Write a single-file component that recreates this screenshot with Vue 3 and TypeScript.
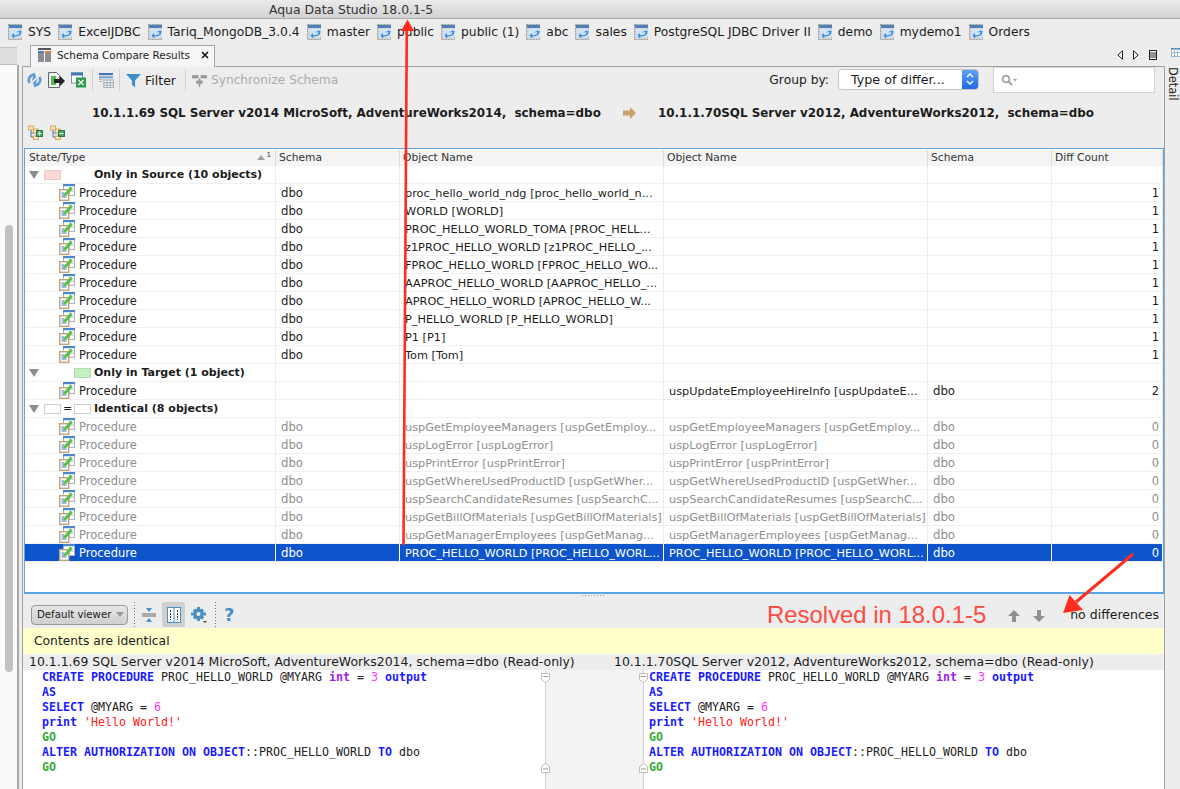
<script setup lang="ts">
type Row = { kind: 'group' | 'item'; label?: string; swatch?: string; cells?: string[]; dim?: boolean; sel?: boolean }

const dbs = ['SYS', 'ExcelJDBC', 'Tariq_MongoDB_3.0.4', 'master', 'public', 'public (1)', 'abc', 'sales', 'PostgreSQL JDBC Driver II', 'demo', 'mydemo1', 'Orders']

function item(a: string, s: string, b: string, s2: string, n: string, dim = false, sel = false): Row {
  return { kind: 'item', cells: [s, a, b, s2, n], dim, sel }
}

const rows: Row[] = [
  { kind: 'group', label: 'Only in Source (10 objects)', swatch: 'src' },
  item('proc_hello_world_ndg [proc_hello_world_n...', 'dbo', '', '', '1'),
  item('WORLD [WORLD]', 'dbo', '', '', '1'),
  item('PROC_HELLO_WORLD_TOMA [PROC_HELL...', 'dbo', '', '', '1'),
  item('z1PROC_HELLO_WORLD [z1PROC_HELLO_...', 'dbo', '', '', '1'),
  item('FPROC_HELLO_WORLD [FPROC_HELLO_WO...', 'dbo', '', '', '1'),
  item('AAPROC_HELLO_WORLD [AAPROC_HELLO_...', 'dbo', '', '', '1'),
  item('APROC_HELLO_WORLD [APROC_HELLO_W...', 'dbo', '', '', '1'),
  item('P_HELLO_WORLD [P_HELLO_WORLD]', 'dbo', '', '', '1'),
  item('P1 [P1]', 'dbo', '', '', '1'),
  item('Tom [Tom]', 'dbo', '', '', '1'),
  { kind: 'group', label: 'Only in Target (1 object)', swatch: 'tgt' },
  item('', '', 'uspUpdateEmployeeHireInfo [uspUpdateE...', 'dbo', '2'),
  { kind: 'group', label: 'Identical (8 objects)', swatch: 'same' },
  item('uspGetEmployeeManagers [uspGetEmploy...', 'dbo', 'uspGetEmployeeManagers [uspGetEmploy...', 'dbo', '0', true),
  item('uspLogError [uspLogError]', 'dbo', 'uspLogError [uspLogError]', 'dbo', '0', true),
  item('uspPrintError [uspPrintError]', 'dbo', 'uspPrintError [uspPrintError]', 'dbo', '0', true),
  item('uspGetWhereUsedProductID [uspGetWher...', 'dbo', 'uspGetWhereUsedProductID [uspGetWher...', 'dbo', '0', true),
  item('uspSearchCandidateResumes [uspSearchC...', 'dbo', 'uspSearchCandidateResumes [uspSearchC...', 'dbo', '0', true),
  item('uspGetBillOfMaterials [uspGetBillOfMaterials]', 'dbo', 'uspGetBillOfMaterials [uspGetBillOfMaterials]', 'dbo', '0', true),
  item('uspGetManagerEmployees [uspGetManag...', 'dbo', 'uspGetManagerEmployees [uspGetManag...', 'dbo', '0', true),
  item('PROC_HELLO_WORLD [PROC_HELLO_WORL...', 'dbo', 'PROC_HELLO_WORLD [PROC_HELLO_WORL...', 'dbo', '0', false, true),
]

const code: [string, string][][] = [
  [['k', 'CREATE PROCEDURE'], ['', ' PROC_HELLO_WORLD @MYARG '], ['t', 'int'], ['', ' = '], ['n', '3'], ['', ' '], ['k', 'output']],
  [['k', 'AS']],
  [['k', 'SELECT'], ['', ' @MYARG = '], ['n', '6']],
  [['k', 'print'], ['', ' '], ['s', "'Hello World!'"]],
  [['g', 'GO']],
  [['k', 'ALTER AUTHORIZATION ON OBJECT'], ['', '::PROC_HELLO_WORLD '], ['k', 'TO'], ['', ' dbo']],
  [['g', 'GO']],
]
</script>

<template>
  <div class="screen">
    <svg class="defs" width="0" height="0" aria-hidden="true">
      <symbol id="db" viewBox="0 0 15 16">
        <rect x="0.5" y="0.5" width="13" height="15" fill="#d4d8dc" stroke="#9a9a9a" stroke-dasharray="2 1" />
        <rect x="1" y="1" width="13" height="3" fill="#4f7fb8" />
        <rect x="3" y="5" width="11" height="8" fill="#cfe4f6" />
        <path d="M12 6.5 8 8.2h3.5c.3 2-1.5 3-5 3l-1-2.2-2 2.8 2.6 2.7.4-2.1c4 0 7.2-1 7-5.4z" fill="#3d8fd8" />
      </symbol>
      <symbol id="proc" viewBox="0 0 16 17">
        <rect x="4.5" y="0.5" width="11" height="11" fill="#fff" stroke="#a9b2bb" />
        <rect x="4" y="0" width="12" height="2.2" fill="#4a86c8" />
        <path d="M10.500 3v9M5 7h11" stroke="#b8c0c8" />
        <rect x="0.7" y="5.7" width="9" height="10.6" fill="#fff" stroke="#c6a27a" stroke-width="1.4" />
        <path d="M2.500 9h3M2.500 11h5M2.500 13h5" stroke="#3f74c5" />
        <path d="M5 10 11.500 2.500l2.400 2.300-6.500 7-3 .8z" fill="#5cc24a" />
      </symbol>
      <symbol id="folder" viewBox="0 0 15 15">
        <path d="M3 5v7h4M3 8h4" fill="none" stroke="#3a78c0" />
        <rect x="0.5" y="1" width="5" height="4" fill="#fbe3b4" stroke="#d9a860" />
        <rect x="5.5" y="4" width="5" height="4" fill="#fbe3b4" stroke="#d9a860" />
        <rect x="5.5" y="11" width="5" height="3.500" fill="#fbe3b4" stroke="#d9a860" />
        <rect x="8.500" y="5.500" width="6" height="6" fill="#4aa56a" stroke="#2c7a44" />
      </symbol>
    </svg>

    <header class="titlebar">Aqua Data Studio 18.0.1-5</header>

    <nav class="dbbar">
      <span v-for="d in dbs" :key="d" class="db">
        <svg class="dbicon"><use href="#db" /></svg>{{ d }}
      </span>
    </nav>

    <div class="work">
      <aside class="left">
        <div class="lefthead"></div>
        <div class="lefttrack"><div class="thumb"></div></div>
      </aside>

      <main class="center">
        <div class="tabrow">
          <div class="tab">
            <svg class="tabicon" viewBox="0 0 13 14">
              <rect x="0" y="0" width="13" height="2" fill="#555" />
              <rect x="0" y="3" width="6" height="11" fill="#8b8f94" />
              <rect x="7" y="3" width="6" height="11" fill="#8b8f94" />
              <rect x="0" y="3" width="6" height="2" fill="#4c7fb5" />
              <rect x="7" y="3" width="6" height="2" fill="#e07b3a" />
            </svg>
            <span>Schema Compare Results</span>
            <svg class="close" viewBox="0 0 8 8"><path d="M1 1l6 6M7 1 1 7" stroke="#111" stroke-width="1.6" /></svg>
          </div>
          <div class="tabnav">
            <svg viewBox="0 0 6 10"><path d="M5.500 .8v8.400L.8 5z" fill="#fff" stroke="#222" /></svg>
            <svg viewBox="0 0 6 10"><path d="M.5 .8v8.400L5.200 5z" fill="#fff" stroke="#222" /></svg>
            <svg viewBox="0 0 8 10"><rect x=".5" y=".5" width="7" height="9" fill="#fff" stroke="#222" /><path d="M1 3h6M1 5h6M1 7h6" stroke="#222" /></svg>
          </div>
        </div>

        <section class="panel">
          <div class="toolbar">
            <svg class="ti" viewBox="0 0 15 16">
              <path d="M2.500 11C.5 7 3 2.500 8 2.500" fill="none" stroke="#5a9ad6" stroke-width="2.600" />
              <path d="M12.500 5c2 4-.5 8.500-5.500 8.500" fill="none" stroke="#5a9ad6" stroke-width="2.600" />
              <path d="M7.500 0 9 5.500 4.500 9.500z" fill="#5a9ad6" />
              <path d="M7.500 16 6 10.500l4.500-4z" fill="#5a9ad6" />
            </svg>
            <svg class="ti wide" viewBox="0 0 17 17">
              <path d="M.5.500h8l3 3v12h-11z" fill="#f2f2f2" stroke="#666" />
              <rect x="3" y="4" width="5" height="9" fill="#58b858" />
              <path d="M6 7h6V4l5 5-5 5v-3H6z" fill="#222" />
            </svg>
            <svg class="ti" viewBox="0 0 15 15">
              <rect x=".5" y=".5" width="11" height="10" fill="#fff" stroke="#7f93a8" />
              <rect x="0" y="0" width="12" height="3" fill="#3f74b5" />
              <rect x="5" y="5" width="10" height="10" fill="#2f9a4a" />
              <path d="M7.500 7.500l5 5M12.500 7.500l-5 5" stroke="#fff" stroke-width="1.300" />
            </svg>
            <i class="sep"></i>
            <svg class="ti tgrid" viewBox="0 0 14 14">
              <rect x="0" y="0" width="13" height="2" fill="#3f74b5" />
              <rect x="0" y="3" width="13" height="2" fill="#7fa6d0" />
              <rect x="4.500" y="6.500" width="9" height="7" fill="#fff" stroke="#a8b0b8" />
              <path d="M4.500 9h9M4.500 11.500h9M7.500 6.500v7M10.500 6.500v7" stroke="#a8b0b8" />
              <path d="M0 6h3M0 8h3" stroke="#a8b0b8" />
            </svg>
            <i class="sep"></i>
            <svg class="ti funnel" viewBox="0 0 14 14"><path d="M0 1h14L8.500 7v6.500l-3-2.500V7z" fill="#3f8fc8" /></svg>
            <span class="filter">Filter</span>
            <i class="sep"></i>
            <svg class="ti sync" viewBox="0 0 14 14">
              <rect x="0" y="2" width="6" height="3" fill="#9a9a9a" />
              <rect x="8" y="2" width="6" height="3" fill="#9a9a9a" />
              <rect x="4" y="7" width="6" height="3" fill="#9a9a9a" />
              <path d="M7 5v8" stroke="#9a9a9a" stroke-width="1.500" />
            </svg>
            <span class="syncl">Synchronize Schema</span>
            <span class="spacer"></span>
            <span class="grp">Group by:</span>
            <div class="select">
              <span class="seltext">Type of differ...</span>
              <span class="selbtn">
                <svg viewBox="0 0 8 14" width="8" height="14"><path d="M1 5l3-3 3 3M1 9l3 3 3-3" fill="none" stroke="#fff" stroke-width="1.300" /></svg>
              </span>
            </div>
            <div class="search">
              <svg viewBox="0 0 18 12" width="18" height="12">
                <circle cx="5" cy="5" r="3.400" fill="none" stroke="#a0a0a0" stroke-width="1.800" />
                <path d="M7.500 7.500 11 11" stroke="#a0a0a0" stroke-width="2" />
                <path d="M12 5h4l-2 2.500z" fill="#a0a0a0" />
              </svg>
            </div>
          </div>

          <div class="conn">
            <span class="cleft">10.1.1.69 SQL Server v2014 MicroSoft, AdventureWorks2014,&nbsp; schema=dbo</span>
            <svg class="carrow" viewBox="0 0 13 12"><path d="M0 3.500h7V0l6 6-6 6V8.500H0z" fill="#c9a36a" /></svg>
            <span>10.1.1.70SQL Server v2012, AdventureWorks2012,&nbsp; schema=dbo</span>
          </div>

          <div class="folds">
            <svg class="fold" viewBox="0 0 15 15"><use href="#folder" /><path d="M9.500 8.500h4M11.500 6.500v4" stroke="#fff" /></svg>
            <svg class="fold" viewBox="0 0 15 15"><use href="#folder" /><path d="M9.500 8.500h4" stroke="#fff" /></svg>
          </div>

          <div class="table">
            <div class="thead">
              <div class="th first">State/Type<span class="sort"><i></i><sup>1</sup></span></div>
              <div class="th">Schema</div>
              <div class="th">Object Name</div>
              <div class="th">Object Name</div>
              <div class="th">Schema</div>
              <div class="th">Diff Count</div>
            </div>
            <div v-for="(r, i) in rows" :key="i" class="tr" :class="{ dim: r.dim, sel: r.sel }">
              <template v-if="r.kind === 'group'">
                <div class="td groupcell">
                  <i class="tri"></i>
                  <i class="sw" :class="r.swatch === 'src' ? 'pink' : r.swatch === 'same' ? 'plain' : 'none'"></i>
                  <b class="eq">{{ r.swatch === 'same' ? '=' : '' }}</b>
                  <i class="sw" :class="r.swatch === 'tgt' ? 'green' : r.swatch === 'same' ? 'plain' : 'none'"></i>
                  <strong>{{ r.label }}</strong>
                </div>
                <div class="td"></div><div class="td"></div><div class="td"></div><div class="td"></div><div class="td"></div>
              </template>
              <template v-else>
                <div class="td itemcell"><svg class="proc"><use href="#proc" /></svg><span class="pl">Procedure</span></div>
                <div class="td sch">{{ r.cells![0] }}</div>
                <div class="td obj">{{ r.cells![1] }}</div>
                <div class="td obj">{{ r.cells![2] }}</div>
                <div class="td sch">{{ r.cells![3] }}</div>
                <div class="td num">{{ r.cells![4] }}</div>
              </template>
            </div>
          </div>

          <div class="sash"></div>

          <div class="viewerbar">
            <div class="viewer">Default viewer<i></i></div>
            <i class="dots"></i>
            <svg class="vi collapse" viewBox="0 0 14 16">
              <path d="M0 7h14M0 9h14" stroke="#666" />
              <path d="M4 1h6L7 5zM4 15h6l-3-4z" fill="#4a90c4" />
            </svg>
            <div class="toggled">
              <svg viewBox="0 0 14 16" width="14" height="16">
                <rect x=".5" y=".5" width="13" height="15" fill="#fff" stroke="#4a90c4" />
                <path d="M7 0v16" stroke="#4a90c4" />
                <path d="M3.500 3v10M10.500 3v10" stroke="#333" stroke-dasharray="2 1" />
              </svg>
            </div>
            <svg class="vi gear" viewBox="0 0 16 16">
              <path d="M6 0h3v2.500l2-1 2 2-1 2h3v3h-3l1 2-2 2-2-1V14H6v-2.500l-2 1-2-2 1-2H0v-3h3l-1-2 2-2 2 1z" fill="#4a8fc0" />
              <circle cx="7.500" cy="7" r="2" fill="#ededed" />
              <path d="M12 14h4l-2 2z" fill="#444" />
            </svg>
            <i class="dots two"></i>
            <span class="help">?</span>
            <span class="spacer"></span>
            <span class="resolved">Resolved in 18.0.1-5</span>
            <svg class="updown" viewBox="0 0 12 12"><path d="M6 0l6 6H8v6H4V6H0z" fill="#909090" /></svg>
            <svg class="updown dn" viewBox="0 0 12 12"><path d="M6 12l6-6H8V0H4v6H0z" fill="#909090" /></svg>
            <span class="nodiff">no differences</span>
          </div>

          <div class="notice">Contents are identical</div>

          <div class="cmphead">
            <span class="hl">10.1.1.69 SQL Server v2014 MicroSoft, AdventureWorks2014, schema=dbo (Read-only)</span>
            <span>10.1.1.70SQL Server v2012, AdventureWorks2012, schema=dbo (Read-only)</span>
          </div>

          <div class="cmp">
            <pre class="code lcode"><div v-for="(l, i) in code" :key="i" class="line"><span v-for="(t, j) in l" :key="j" :class="t[0]">{{ t[1] }}</span></div></pre>
            <div class="gutter">
              <svg class="mk m1 ml" viewBox="0 0 9 10"><path d="M.5.500h8v6l-4 3-4-3z" fill="#fff" stroke="#bdbdbd" /><path d="M2 3.500h5" stroke="#999" /></svg>
              <svg class="mk m2 ml" viewBox="0 0 9 10"><path d="M.5 9.500h8v-6l-4-3-4 3z" fill="#fff" stroke="#bdbdbd" /><path d="M2 6h5" stroke="#999" /></svg>
              <svg class="mk m1 mr" viewBox="0 0 9 10"><path d="M.5.500h8v6l-4 3-4-3z" fill="#fff" stroke="#bdbdbd" /><path d="M2 3.500h5" stroke="#999" /></svg>
              <svg class="mk m2 mr" viewBox="0 0 9 10"><path d="M.5 9.500h8v-6l-4-3-4 3z" fill="#fff" stroke="#bdbdbd" /><path d="M2 6h5" stroke="#999" /></svg>
            </div>
            <pre class="code rcode"><div v-for="(l, i) in code" :key="i" class="line"><span v-for="(t, j) in l" :key="j" :class="t[0]">{{ t[1] }}</span></div></pre>
          </div>
        </section>
      </main>

      <aside class="right">
        <svg class="rgrid" viewBox="0 0 9 9"><rect x=".5" y=".5" width="9" height="8" fill="#fff" stroke="#9db6d0" /><path d="M0 .5h10" stroke="#4a80b8" stroke-width="2" /><path d="M3.500 0v9M6.500 0v9M0 4.500h9" stroke="#9db6d0" /></svg>
        <span class="detail">Detail</span>
      </aside>
    </div>

    <svg class="overlay" viewBox="0 0 1180 789" width="1180" height="789">
      <path d="M403.500 545 406.800 28" stroke="#ff2c1f" stroke-width="2.600" fill="none" />
      <path d="M407.500 19.500 414 31H401z" fill="#ff2c1f" />
      <path d="M1133 554 1076 602" stroke="#ff2c1f" stroke-width="3" fill="none" />
      <path d="M1063 613 1069.500 595 1083 610z" fill="#ff2c1f" />
    </svg>
  </div>
</template>

<style scoped>
.screen {
  position: relative;
  width: 1180px;
  height: 789px;
  overflow: hidden;
  display: flex;
  flex-direction: column;
  background: #ededed;
  color: #1c1c1c;
  font-family: "DejaVu Sans", sans-serif;
  font-size: 11.5px;
}
.defs { position: absolute; }
.titlebar {
  height: 19px;
  flex: none;
  box-sizing: border-box;
  padding-left: 269px;
  line-height: 19px;
  font-size: 12.4px;
  color: #333;
  background: linear-gradient(#ebebeb, #d2d2d2);
  border-bottom: 1px solid #ababab;
}
.dbbar {
  height: 25px;
  flex: none;
  display: flex;
  align-items: center;
  gap: 7px;
  padding-left: 8px;
  font-size: 12.3px;
  white-space: nowrap;
}
.db { display: inline-flex; align-items: center; }
.dbicon { width: 15px; height: 16px; margin-right: 5px; }
.work { flex: 1; display: flex; min-height: 0; }
.left { width: 22px; flex: none; display: flex; flex-direction: column; }
.lefthead {
  height: 18px;
  box-sizing: border-box;
  margin-top: 3px;
  background: #dedede;
  border-top: 1px solid #c4c4c4;
  border-bottom: 1px solid #bdbdbd;
  width: 17px;
}
.lefttrack {
  flex: 1;
  position: relative;
  background: #fafafa;
  border-right: 2px solid #a8a8a8;
  width: 17px;
}
.thumb {
  position: absolute;
  left: 5px;
  top: 160px;
  width: 8px;
  height: 447px;
  border-radius: 4px;
  background: #c2c2c2;
}
.center { flex: 1; min-width: 0; display: flex; flex-direction: column; }
.tabrow { height: 22px; flex: none; display: flex; position: relative; }
.tab {
  margin: 1px 0 -1px 8px;
  width: 185px;
  box-sizing: border-box;
  height: 22px;
  display: flex;
  align-items: center;
  background: #f6f6f6;
  border: 1px solid #a5a5a5;
  border-bottom: none;
  padding: 0 0 3px 7px;
  position: relative;
  z-index: 1;
  font-size: 10.4px;
}
.tabicon { width: 13px; height: 14px; margin-right: 6px; }
.close { width: 8px; height: 8px; margin-left: auto; margin-right: 5px; }
.tabnav { margin-left: auto; display: flex; align-items: center; gap: 10px; padding-right: 8px; }
.tabnav svg { width: 6px; height: 10px; }
.tabnav svg:last-child { width: 8px; }
.panel {
  flex: 1;
  min-height: 0;
  display: flex;
  flex-direction: column;
  border-left: 1px solid #a0a0a0;
  border-right: 1px solid #a0a0a0;
  border-top: 1px solid #a0a0a0;
  background: #ededed;
}
.toolbar { height: 26px; flex: none; display: flex; align-items: center; padding-left: 4px; padding-right: 9px; }
.ti { width: 15px; height: 16px; margin-right: 6px; flex: none; }
.ti.wide { width: 17px; height: 17px; }
.ti.tgrid { margin-right: 5px; height: 15px; }
.sep { width: 1px; height: 22px; background: #cfcfcf; margin: 0 6px 0 0; flex: none; }
.funnel { margin-right: 4px; height: 15px; }
.filter { font-size: 12.5px; margin-right: 9px; }
.sync { margin-right: 4px; height: 15px; }
.syncl { color: #ababab; font-size: 12.2px; }
.spacer { flex: 1; }
.grp { margin-right: 9px; font-size: 12.3px; }
.select {
  width: 141px;
  height: 21px;
  box-sizing: border-box;
  background: #fff;
  border: 1px solid #c4c4c4;
  border-radius: 4px;
  display: flex;
  align-items: center;
  overflow: hidden;
  font-size: 12.7px;
  margin-top: -2px;
}
.seltext { padding-left: 12px; flex: 1; white-space: nowrap; }
.selbtn {
  width: 16px;
  height: 100%;
  background: linear-gradient(#5ea2f5, #1f68e0);
  display: flex;
  align-items: center;
  justify-content: center;
}
.search {
  width: 162px;
  height: 26px;
  box-sizing: border-box;
  margin-left: 14px;
  background: #fff;
  border: 1px solid #d2d2d2;
  display: flex;
  align-items: center;
  padding-left: 7px;
}
.conn {
  height: 18px;
  flex: none;
  margin-top: 11px;
  padding-left: 69px;
  display: flex;
  align-items: center;
  font-weight: 700;
  font-size: 11.92px;
  white-space: nowrap;
}
.cleft { width: 531px; flex: none; }
.carrow { width: 13px; height: 12px; flex: none; margin-right: 22px; }
.folds { height: 15px; flex: none; display: flex; gap: 7px; padding-left: 5px; margin-top: 3px; }
.fold { width: 15px; height: 15px; }
.table {
  height: 446px;
  flex: none;
  margin: 8px 0 0 1px;
  box-sizing: border-box;
  width: 1140px;
  border: 1px solid #5aa5e6;
  border-width: 1px 1px 2px 1px;
  background: #fff;
  overflow: hidden;
}
.thead, .tr { display: grid; grid-template-columns: 251px 124px 264px 264px 124px 111px; }
.thead { height: 16px; background: #f4f4f4; margin-top: 1px; font-size: 10.7px; color: #333; }
.th { line-height: 15px; padding-left: 3px; border-right: 1px solid #dcdcdc; white-space: nowrap; position: relative; }
.th.first { padding-left: 4px; }
.sort { position: absolute; right: 4px; top: 0; display: flex; align-items: center; height: 15px; gap: 2px; }
.sort i { border: 4.500px solid transparent; border-top: 0; border-bottom: 5px solid #a2a2a2; }
.sort sup { font-size: 7px; line-height: 7px; margin-top: -4px; }
.tr { height: 18px; line-height: 19px; border-bottom: 1px solid #f0f0f0; box-sizing: border-box; white-space: nowrap; }
.td { border-right: 1px solid #ececec; overflow: hidden; position: relative; min-width: 0; }
.groupcell { display: flex; align-items: center; overflow: visible; font-size: 11px; line-height: 17px; }
.tri { width: 0; height: 0; margin-left: 4px; border-left: 5px solid transparent; border-right: 5px solid transparent; border-top: 8px solid #8c8c8c; }
.sw { width: 17px; height: 10px; box-sizing: border-box; flex: none; }
.pink { background: #fdd9d3; border: 1px solid #e8c8c4; }
.green { background: #c2f0c2; border: 1px solid #b0deb0; }
.plain { background: #fff; border: 1px solid #cfcfcf; }
.none { background: transparent; }
.groupcell > .sw:nth-of-type(2) { margin-left: 5px; }
.eq { width: 13px; text-align: center; font-weight: 400; font-size: 11px; flex: none; }
strong { font-weight: 700; margin-left: 3px; }
.itemcell { display: flex; align-items: center; padding-left: 34px; line-height: 17px; }
.pl { margin-top: 2px; }
.proc { width: 16px; height: 17px; margin-right: 4px; flex: none; }
.sch { padding-left: 5px; font-size: 11.7px; }
.obj { padding-left: 5px; font-size: 11.3px; }
.num { text-align: right; padding-right: 3px; }
.dim { color: #8e8e8e; }
.sel { background: #0e54ca; color: #fff; }
.sel .td { border-right-color: #fff; }
.sash { height: 7px; flex: none; position: relative; }
.sash::after {
  content: "";
  position: absolute;
  left: 559px;
  top: 1px;
  width: 24px;
  height: 1px;
  background: repeating-linear-gradient(90deg, #999 0 1px, transparent 1px 3px);
}
.viewerbar { height: 27px; flex: none; display: flex; align-items: center; padding: 0 5px 0 8px; }
.viewer {
  width: 97px;
  height: 20px;
  box-sizing: border-box;
  border: 1px solid #999;
  border-radius: 4px;
  background: linear-gradient(#e6e6e6, #cfcfcf);
  display: flex;
  align-items: center;
  padding-left: 5px;
  font-size: 10.2px;
  white-space: nowrap;
}
.viewer i { margin-left: 5px; border-left: 4px solid transparent; border-right: 4px solid transparent; border-top: 5px solid #999; }
.dots { width: 1px; height: 25px; margin: 0 7px 0 6px; background: repeating-linear-gradient(#777 0 1px, transparent 1px 3px); flex: none; }
.vi { flex: none; }
.collapse { width: 14px; height: 16px; }
.toggled {
  width: 23px;
  height: 25px;
  margin-left: 6px;
  border-radius: 2px;
  background: #cfcfcf;
  display: flex;
  align-items: center;
  justify-content: center;
}
.gear { width: 16px; height: 16px; margin-left: 6px; }
.dots.two { margin: 0 8px 0 8px; }
.help { color: #4a90c4; font-weight: 700; font-size: 18px; line-height: 20px; }
.resolved { font-family: "Liberation Sans", sans-serif; font-size: 23.9px; color: #ff4a42; margin-right: 22px; white-space: nowrap; }
.updown { width: 12px; height: 12px; margin-top: 2px; flex: none; }
.dn { margin-left: 13px; }
.nodiff { margin-left: 25px; font-size: 12.5px; white-space: nowrap; }
.notice { height: 26px; flex: none; line-height: 26px; background: #ffffcc; padding-left: 11px; font-size: 12.3px; }
.cmphead { height: 16px; flex: none; display: flex; line-height: 16px; font-size: 12.45px; padding-left: 6px; white-space: nowrap; }
.hl { width: 585px; flex: none; }
.cmp { flex: 1; display: flex; min-height: 0; background: #fff; }
.code { margin: 0; font-family: "DejaVu Sans Mono", monospace; font-size: 11.63px; line-height: 15px; color: #222; }
.lcode { width: 522px; flex: none; box-sizing: border-box; padding-left: 19px; }
.rcode { flex: 1; padding-left: 5px; }
.line { height: 15px; }
.k { color: #1a1aff; font-weight: 700; }
.t { color: #a020f0; font-weight: 700; }
.n { color: #ff33ff; }
.s { color: #ff2020; }
.g { color: #35aa35; font-weight: 700; }
.gutter {
  width: 99px;
  flex: none;
  position: relative;
  box-sizing: border-box;
  background: #f3f3f3;
  border-left: 1px solid #cfcfcf;
  border-right: 1px solid #cfcfcf;
}
.mk { position: absolute; width: 9px; height: 10px; }
.m1 { top: 3px; }
.m2 { top: 93px; }
.ml { left: -5px; }
.mr { right: -5px; }
.right { width: 15px; flex: none; position: relative; }
.rgrid { position: absolute; left: 6px; top: 4px; width: 9px; height: 9px; }
.detail {
  position: absolute;
  left: 1px;
  top: 23px;
  writing-mode: vertical-rl;
  font-size: 11.4px;
}
.overlay { position: absolute; left: 0; top: 0; pointer-events: none; }
</style>
